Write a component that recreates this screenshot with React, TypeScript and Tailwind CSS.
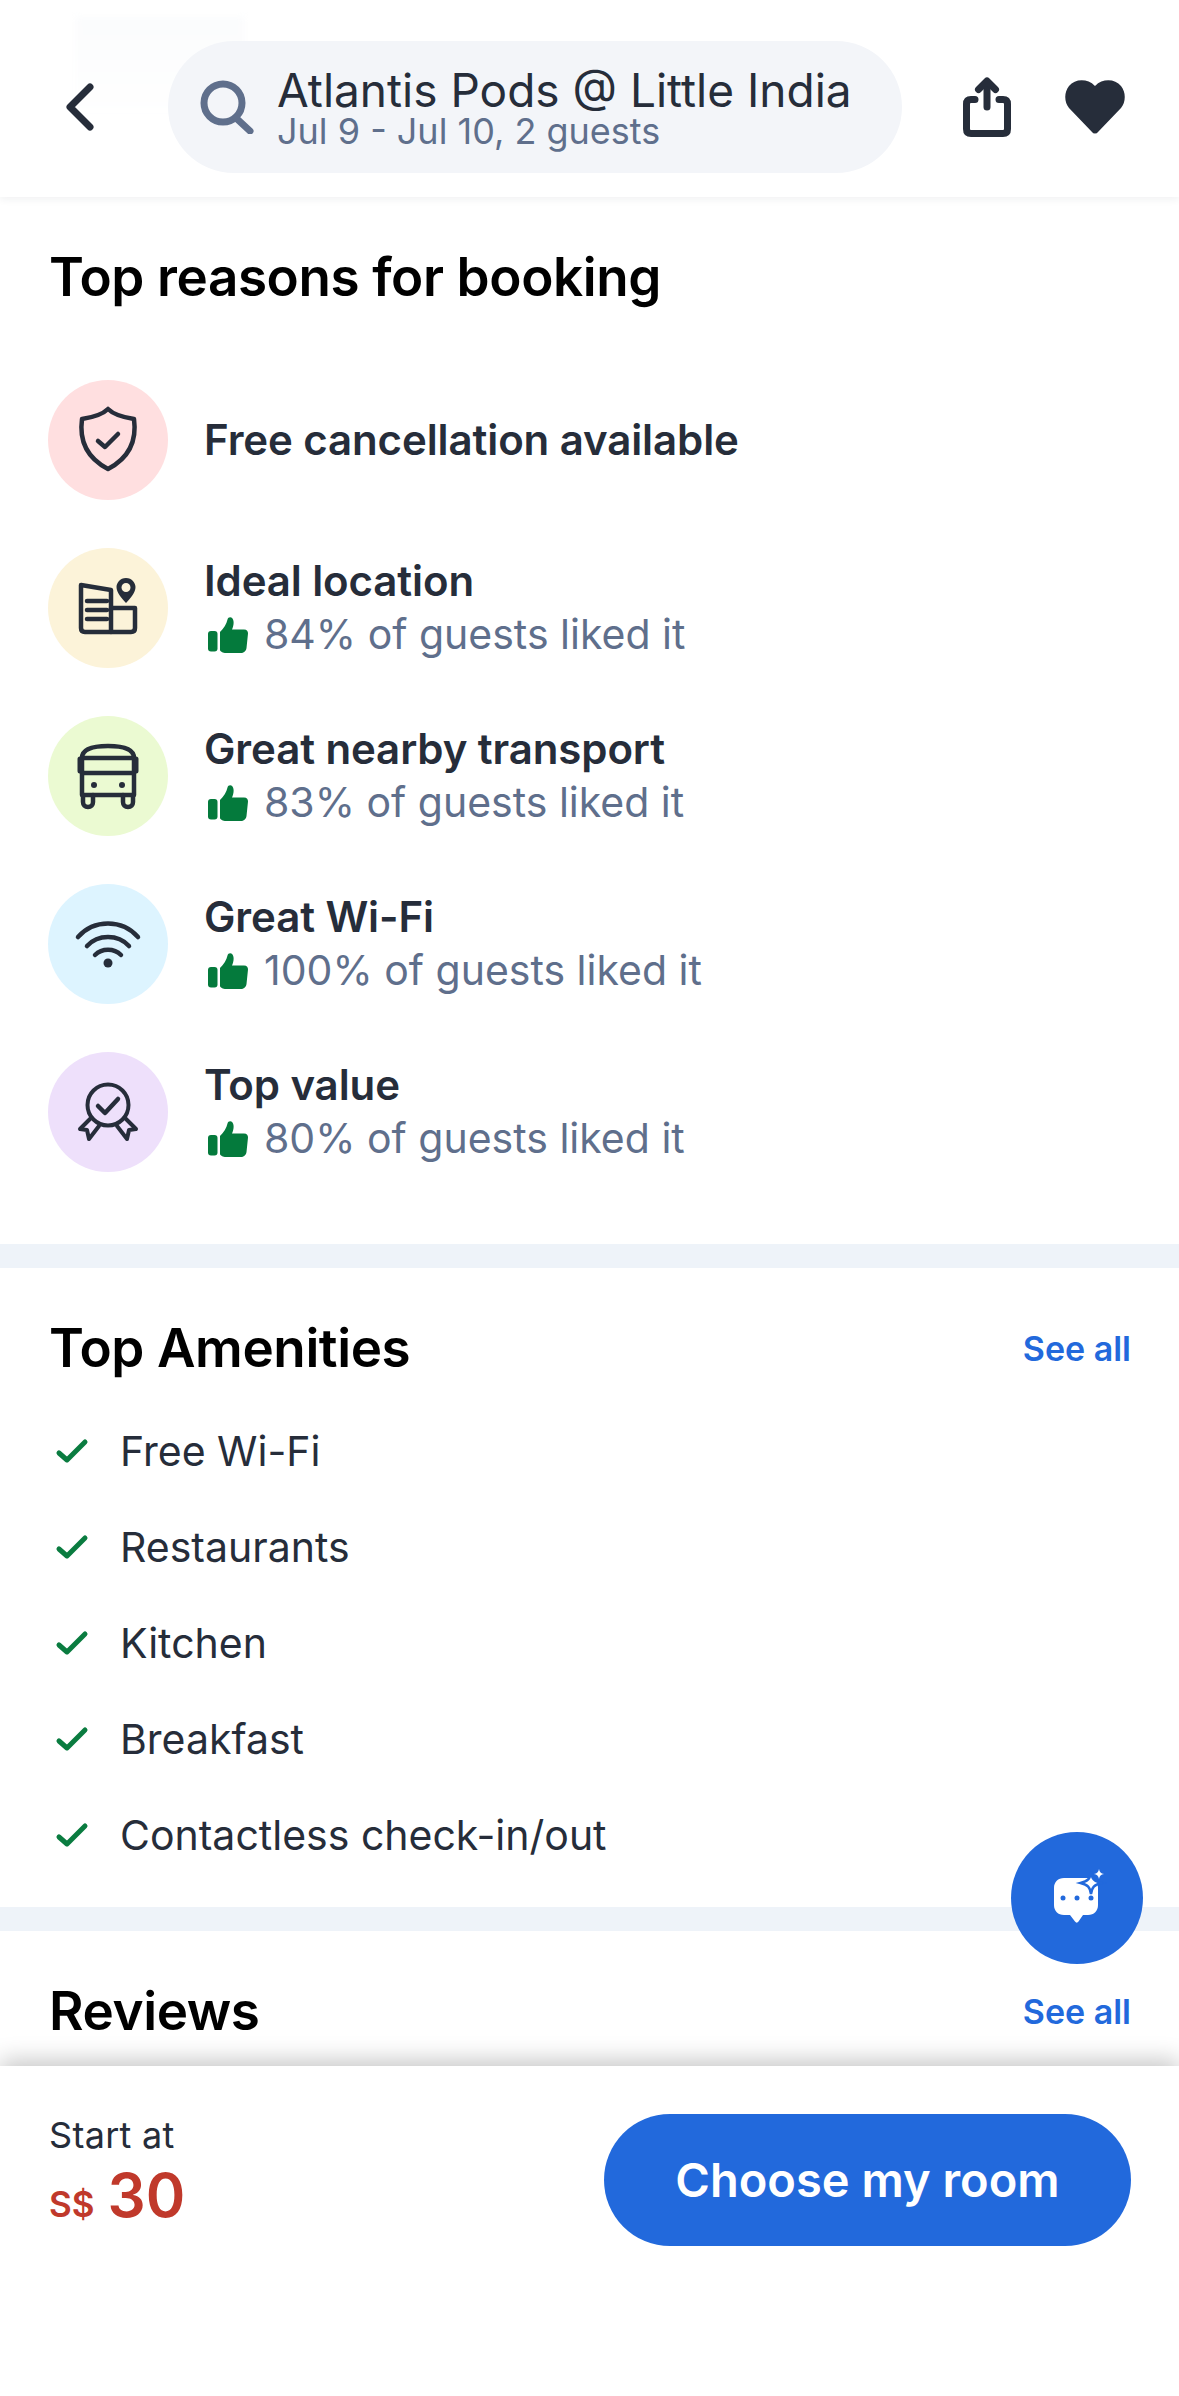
import React from "react";

const Ic = ({ children }: { children: React.ReactNode }) => (
  <svg viewBox="0 0 72 72" className="w-[72px] h-[72px]" fill="none" stroke="#262d3a" strokeWidth="4.5" strokeLinecap="round" strokeLinejoin="round">
    {children}
  </svg>
);

const Shield = () => (
  <Ic>
    <path d="M36 5C41 10 49 13 62 15C65 37 57 54 36 65C15 54 7 37 10 15C23 13 31 10 36 5Z" />
    <path d="M26 37L33 43L46 30" />
  </Ic>
);
const Building = () => (
  <Ic>
    <path d="M9 13L39 18V60H13Q9 60 9 56Z" />
    <path d="M39 36H63V56Q63 60 59 60H39" />
    <path d="M15 29H35M15 38H35M15 47H35" />
    <path fillRule="evenodd" clipRule="evenodd" fill="#262d3a" stroke="none" d="M54 6C60 6 63.500 11 63.500 15C63.500 20 59 26 54 31C49 26 44.500 20 44.500 15C44.500 11 48 6 54 6ZM54 11A4.500 4.500 0 1 0 54.010 20A4.500 4.500 0 1 0 54 11Z" />
  </Ic>
);
const Bus = () => (
  <Ic>
    <path d="M10 55V18C10 9 20 6 36 6C52 6 62 9 62 18V55Z" />
    <path d="M10 18H62M10 33H62" />
    <path d="M8 19V31M64 19V31" strokeWidth="5" />
    <path d="M11 55V62C11 65 13 67 16 67C19 67 21 65 21 62V55M51 55V62C51 65 53 67 56 67C59 67 61 65 61 62V55" />
    <circle cx="22" cy="45" r="3" fill="#262d3a" stroke="none" />
    <circle cx="50" cy="45" r="3" fill="#262d3a" stroke="none" />
  </Ic>
);
const Wifi = () => (
  <Ic>
    <path d="M6 29C22 11 50 11 66 29" />
    <path d="M15 38C26 26 46 26 57 38" />
    <path d="M23 47C30 40 42 40 49 47" />
    <circle cx="36" cy="55" r="4.500" fill="#262d3a" stroke="none" />
  </Ic>
);
const Medal = () => (
  <Ic>
    <circle cx="36" cy="29" r="20.500" strokeWidth="4" />
    <path d="M26 30L33 37L46 23" />
    <path d="M19 42L8 53L15 54L17 63L27 50" strokeWidth="4" />
    <path d="M53 42L64 53L57 54L55 63L45 50" strokeWidth="4" />
  </Ic>
);

const Thumb = () => (
  <svg viewBox="0 0 40 36" className="w-[40px] h-[36px] shrink-0" fill="#047a3c">
    <rect x="0" y="14" width="9.500" height="20.500" rx="3" />
    <path d="M12 15C16 11 18.500 7 19.500 2.500C20 0 23 -0.500 24.500 1.500C26.500 4.500 25.500 9 24 12.500H36C39 12.500 40 14.500 40 16.500L38.500 31C38 34.500 35.500 36 33 36H18C15 36 12 34.500 12 33Z" />
  </svg>
);

const Check = () => (
  <svg viewBox="0 0 36 28" className="w-[36px] h-[28px] shrink-0" fill="none" stroke="#0a7c40" strokeWidth="5" strokeLinecap="round" strokeLinejoin="round">
    <path d="M5 15L13 22L31 4" />
  </svg>
);

const reasons = [
  { bg: "bg-[#ffdfe0]", icon: <Shield />, title: "Free cancellation available" },
  { bg: "bg-[#fcf3d9]", icon: <Building />, title: "Ideal location", sub: "84% of guests liked it" },
  { bg: "bg-[#ebfad2]", icon: <Bus />, title: "Great nearby transport", sub: "83% of guests liked it" },
  { bg: "bg-[#ddf4ff]", icon: <Wifi />, title: "Great Wi-Fi", sub: "100% of guests liked it" },
  { bg: "bg-[#eee0fb]", icon: <Medal />, title: "Top value", sub: "80% of guests liked it" },
];

const amenities = ["Free Wi-Fi", "Restaurants", "Kitchen", "Breakfast", "Contactless check-in/out"];

export default function App() {
  return (
    <div className="relative w-[1179px] h-[2396px] overflow-hidden bg-white flex flex-col font-[Inter,sans-serif]">
      <header className="relative z-10 h-[197px] shrink-0 bg-white shadow-[0_2px_8px_rgba(30,40,60,0.07)] flex items-center pl-[66px] pr-[54px] pt-[17px]">
        <div className="absolute left-[75px] top-[17px] w-[170px] h-[100px] bg-gradient-to-b from-[#fbfcfd] to-white blur-[3px]" />
        <svg viewBox="0 0 28 48" className="relative w-[28px] h-[48px] shrink-0" fill="none" stroke="#262d3a" strokeWidth="7" strokeLinecap="round" strokeLinejoin="round">
          <path d="M24 4L4 24L24 44" />
        </svg>
        <div className="relative ml-[74px] w-[734px] h-[132px] rounded-[66px] bg-[#f3f5f9] flex items-center pl-[32px]">
          <svg viewBox="0 0 54 54" className="w-[54px] h-[54px] shrink-0" fill="none" stroke="#5f6f8c" strokeWidth="7" strokeLinecap="round">
            <circle cx="23" cy="23" r="19" />
            <path d="M36 38L50 51" />
          </svg>
          <div className="ml-[23px] pt-[2px] flex flex-col">
            <div className="text-[46px] leading-[46px] text-[#262d3a] whitespace-nowrap">Atlantis Pods @ Little India</div>
            <div className="text-[36px] leading-[36px] text-[#5f6f8c] whitespace-nowrap">Jul 9 - Jul 10, 2 guests</div>
          </div>
        </div>
        <svg viewBox="0 0 48 60" className="ml-[61px] w-[48px] h-[60px] shrink-0" fill="none" stroke="#262d3a" strokeWidth="7" strokeLinecap="round" strokeLinejoin="round">
          <path d="M12 22.500H8Q3.500 22.500 3.500 27V52Q3.500 56.500 8 56.500H40Q44.500 56.500 44.500 52V27Q44.500 22.500 40 22.500H36" />
          <path d="M24 5V30" />
          <path d="M15.500 12.500L24 4L32.500 12.500" />
        </svg>
        <svg viewBox="0 0 60 54" className="ml-[54px] w-[60px] h-[54px] shrink-0" fill="#262d3a">
          <path d="M30 53.500Q28 53.500 27 52L4 28C-1 22 -1 12 4 6C10 -1 22 -2 30 6C38 -2 50 -1 56 6C61 12 61 22 56 28L33 52Q32 53.500 30 53.500Z" />
        </svg>
      </header>

      <main className="flex-1 min-h-0 overflow-hidden relative">
        <section className="px-[49px] pt-[48px] h-[1047px]">
          <h2 className="text-[53px] leading-[64px] font-semibold text-black tracking-[-0.4px]">Top reasons for booking</h2>
          <ul className="mt-[71px] flex flex-col gap-[48px]">
            {reasons.map((r) => (
              <li key={r.title} className="flex items-center">
                <div className={`w-[120px] h-[120px] rounded-full flex items-center justify-center shrink-0 -ml-[1px] ${r.bg}`}>{r.icon}</div>
                <div className="ml-[36px] flex flex-col">
                  <div className="text-[42px] leading-[54px] font-semibold text-[#262d3a] tracking-[-0.1px]">{r.title}</div>
                  {r.sub && (
                    <div className="flex items-center h-[54px]">
                      <div className="ml-[4px]"><Thumb /></div>
                      <span className="ml-[16px] text-[41px] text-[#5f6f8c]">{r.sub}</span>
                    </div>
                  )}
                </div>
              </li>
            ))}
          </ul>
        </section>
        <div className="h-[24px] bg-[#eef3f9]" />
        <section className="px-[49px] pt-[48px] h-[639px]">
          <div className="flex items-center justify-between">
            <h2 className="text-[53px] leading-[64px] font-semibold text-black tracking-[-0.4px]">Top Amenities</h2>
            <a className="text-[34px] font-semibold text-[#2269dc] -mr-[1px]">See all</a>
          </div>
          <ul className="mt-[24px] flex flex-col">
            {amenities.map((a) => (
              <li key={a} className="flex items-center h-[96px]">
                <div className="ml-[5px]"><Check /></div>
                <span className="ml-[30px] text-[41px] text-[#262d3a]">{a}</span>
              </li>
            ))}
          </ul>
        </section>
        <div className="h-[24px] bg-[#eef3f9]" />
        <section className="px-[49px] pt-[48px]">
          <div className="flex items-center justify-between">
            <h2 className="text-[53px] leading-[64px] font-semibold text-black tracking-[-0.4px]">Reviews</h2>
            <a className="text-[34px] font-semibold text-[#2269dc] -mr-[1px]">See all</a>
          </div>
        </section>
      </main>

      <footer className="relative z-10 h-[330px] shrink-0 bg-white shadow-[0_-6px_22px_rgba(0,0,0,0.22)] flex items-start justify-between pl-[49px] pr-[48px] pt-[48px]">
        <div className="flex flex-col">
          <div className="text-[36px] leading-[42px] text-[#262d3a] tracking-[0.3px]">Start at</div>
          <div className="flex items-baseline text-[#c0392b] mt-[6px]">
            <span className="text-[35px] leading-[66px] font-semibold">S$</span>
            <span className="ml-[13px] text-[60px] leading-[66px] font-semibold">30</span>
          </div>
        </div>
        <button className="w-[527px] h-[132px] rounded-[66px] bg-[#2269dc] text-white text-[47px] font-semibold">Choose my room</button>
      </footer>

      <button className="absolute left-[1011px] top-[1832px] z-20 w-[132px] h-[132px] rounded-full bg-[#2269dc] flex items-center justify-center">
        <svg viewBox="0 0 60 60" className="w-[60px] h-[60px]">
          <path fill="#fff" d="M17 10H41C47 10 51 14 51 20V37C51 43 47 47 41 47H36L31.500 53.500C30.500 55 29 55 28 53.500L23 47H17C11 47 7 43 7 37V20C7 14 11 10 17 10Z" />
          <circle cx="16" cy="30" r="2.500" fill="#2269dc" />
          <circle cx="30" cy="30" r="2.500" fill="#2269dc" />
          <circle cx="44" cy="30" r="2.500" fill="#2269dc" />
          <path fill="#fff" stroke="#2269dc" strokeWidth="2.500" d="M44 4C45 11 47 13 54.500 15C47 17 45 19 44 26C43 19 41 17 33.500 15C41 13 43 11 44 4Z" />
          <path fill="#fff" d="M52 1C52.500 4 54 5.500 57 6C54 6.500 52.500 8 52 11C51.500 8 50 6.500 47 6C50 5.500 51.500 4 52 1Z" />
        </svg>
      </button>
    </div>
  );
}
